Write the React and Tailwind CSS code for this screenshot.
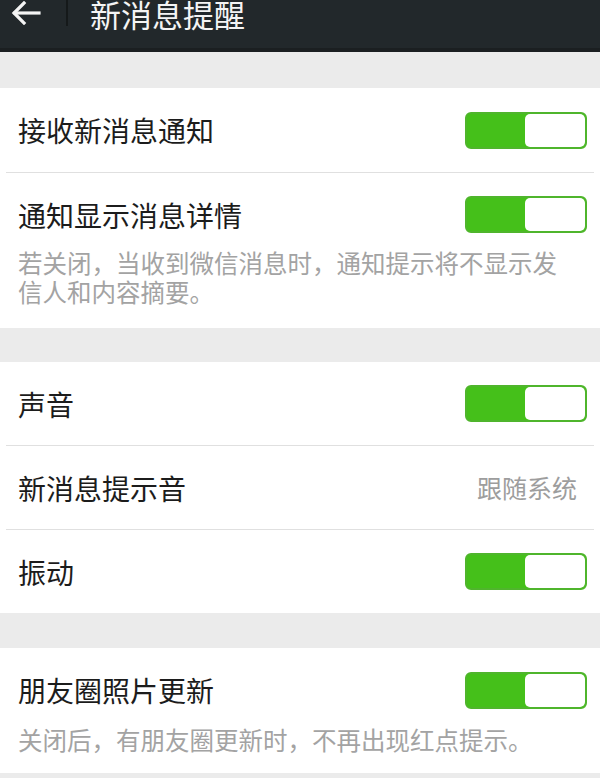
import React from 'react';

const font = { fontFamily: '"Noto Sans CJK SC", "Noto Sans", sans-serif' };

const Toggle = () => (
  <div className="flex h-[37px] w-[122px] shrink-0 overflow-hidden rounded-[6px] border-2 border-[#4fb52c] bg-[#45c01a]">
    <div className="w-[58px]" />
    <div className="flex-1 rounded-[5px] bg-white" />
  </div>
);

const Divider = () => <div className="mx-[6px] h-px bg-[#e0e0e0]" />;

const Gap = ({ h }) => <div className={`bg-[#ebebeb] ${h}`} />;

const Row = ({ title, right, h = 'h-[84px]' }) => (
  <div className={`flex ${h} items-center justify-between pl-[18px] pr-[13px]`}>
    <span className="text-[28px] leading-none text-[#1c1c1c]">{title}</span>
    {right}
  </div>
);

const Desc = ({ children, className }) => (
  <div className={`pl-[18px] pr-[30px] text-[24.5px] leading-[29px] text-[#a3a3a3] ${className}`}>
    {children}
  </div>
);

export default function App() {
  return (
    <div className="h-[778px] w-[600px] overflow-hidden bg-[#ebebeb]" style={font}>
      <div className="h-[52px] border-b-4 border-[#1b1f21] bg-[#22282b]">
        <div className="flex h-[26px] items-center">
          <div className="flex w-[66px] items-center pl-[11px]">
            <svg width="30" height="24" viewBox="0 0 30 24" fill="none" stroke="#f4f4f4" strokeWidth="3.2" strokeLinecap="square">
              <path d="M28 12H4" />
              <path d="M13 2L3 12l10 10" />
            </svg>
          </div>
          <div className="-mt-[8px] h-[34px] w-[2px] bg-[#15191a]" />
          <span className="ml-[22px] text-[31px] leading-none text-[#f4f4f4]">新消息提醒</span>
        </div>
      </div>

      <Gap h="h-[36px]" />

      <div className="bg-white">
        <Row title="接收新消息通知" right={<Toggle />} />
        <Divider />
        <Row title="通知显示消息详情" right={<Toggle />} h="h-[83px]" />
        <Desc className="-mt-[8px] pb-[22px]">
          若关闭，当收到微信消息时，通知提示将不显示发信人和内容摘要。
        </Desc>
      </div>

      <Gap h="h-[34px]" />

      <div className="bg-white">
        <Row title="声音" right={<Toggle />} h="h-[83px]" />
        <Divider />
        <div className="flex h-[83px] items-center justify-between pl-[18px] pr-[23px]">
          <span className="text-[28px] leading-none text-[#1c1c1c]">新消息提示音</span>
          <span className="text-[25px] leading-none text-[#9d9d9d]">跟随系统</span>
        </div>
        <Divider />
        <Row title="振动" right={<Toggle />} h="h-[83px]" />
      </div>

      <Gap h="h-[35px]" />

      <div className="bg-white">
        <Row title="朋友圈照片更新" right={<Toggle />} />
        <Desc className="-mt-[7px] pb-[19px]">
          关闭后，有朋友圈更新时，不再出现红点提示。
        </Desc>
      </div>
    </div>
  );
}
